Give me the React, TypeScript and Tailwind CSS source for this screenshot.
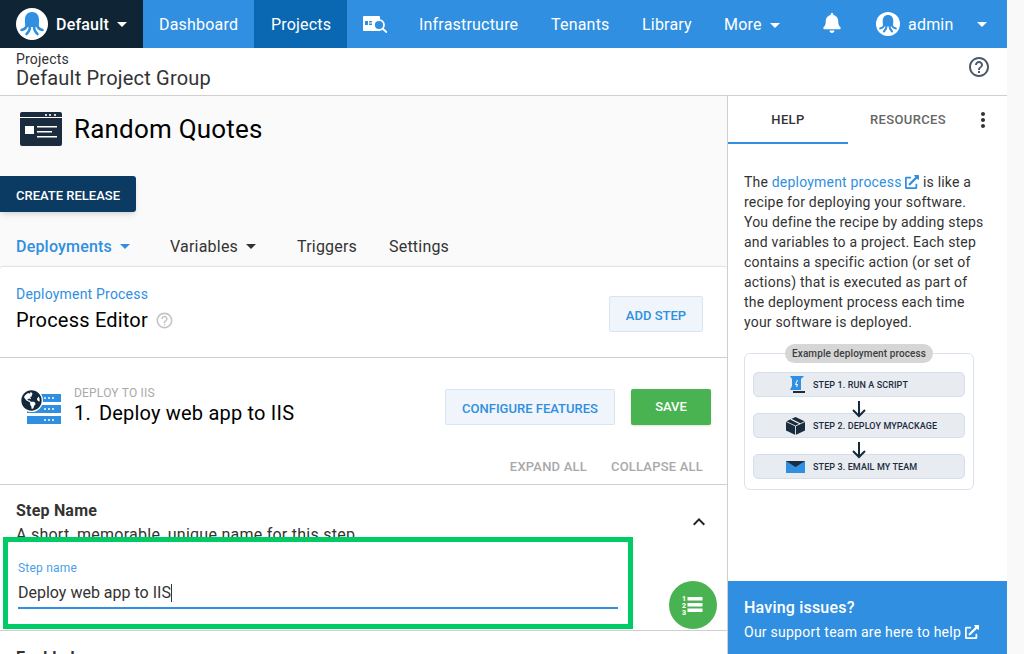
import { FaBell, FaExternalLinkAlt, FaGlobeAmericas } from "react-icons/fa";
import { MdExpandLess, MdHelpOutline, MdMoreVert } from "react-icons/md";

function Caret({ className = "" }: { className?: string }) {
  return <span className={`inline-block w-0 h-0 border-x-[5px] border-x-transparent border-t-[5px] ${className}`} />;
}

function OctopusLogo({ size, fill }: { size: number; fill: string }) {
  return (
    <svg width={size} height={size} viewBox="0 0 32 32">
      <circle cx="16" cy="16" r="16" fill="#fff" />
      <path fill={fill} d="M16 4c4.500 0 7 3.200 7 7.500 0 3 .2 5-1 7.500H10c-1.200-2.500-1-4.500-1-7.500C9 7.200 11.500 4 16 4z" />
      <g fill="none" stroke={fill} strokeWidth="2.600" strokeLinecap="round">
        <path d="M11 16.500Q10.500 21 5.500 22" />
        <path d="M14 18Q14 23 10.500 26" />
        <path d="M18 18Q18 23 21.500 26" />
        <path d="M21 16.500Q21.500 21 26.500 22" />
      </g>
    </svg>
  );
}

function ProjectIcon() {
  return (
    <svg width="42" height="34" viewBox="0 0 42 34">
      <rect width="42" height="34" rx="2" fill="#1a2c3d" />
      <rect x="0" y="5" width="42" height="1" fill="#fff" />
      <circle cx="26" cy="3" r="1.100" fill="#fff" />
      <circle cx="30" cy="3" r="1.100" fill="#fff" />
      <circle cx="35" cy="3" r="1.100" fill="#fff" />
      <rect x="5" y="14" width="9" height="8" fill="#fff" />
      <rect x="17" y="14" width="20" height="1.500" fill="#fff" />
      <rect x="17" y="19" width="15" height="1.500" fill="#fff" />
      <rect x="17" y="24" width="20" height="1.500" fill="#fff" />
    </svg>
  );
}

function TasksIcon() {
  return (
    <svg width="24" height="17" viewBox="0 0 24 17">
      <rect x="0" y="0" width="17" height="15" rx="1" fill="#fff" />
      <rect x="2" y="5" width="3" height="4" fill="#308fe0" />
      <rect x="6" y="5" width="3" height="1.500" fill="#308fe0" />
      <rect x="6" y="7.500" width="3" height="1.500" fill="#308fe0" />
      <circle cx="16" cy="9" r="5" fill="#308fe0" stroke="#fff" strokeWidth="1.800" />
      <path d="M19.500 12.500L24 16.500" stroke="#fff" strokeWidth="2" />
    </svg>
  );
}

function ServerGlobeIcon() {
  return (
    <div className="relative w-[42px] h-[38px]">
      <div className="absolute left-[7px] top-[6px] flex flex-col gap-[3px]">
        {[0, 1, 2].map((i) => (
          <div key={i} className="w-[34px] h-[8px] bg-[#308fe0] flex items-center justify-end gap-[2px] pr-[7px]">
            <span className="w-[2px] h-[2px] bg-white rounded-full" />
            <span className="w-[2px] h-[2px] bg-white rounded-full" />
            <span className="w-[2px] h-[2px] bg-white rounded-full" />
          </div>
        ))}
      </div>
      <div className="absolute left-0 top-[1px] rounded-full bg-white p-[1px]">
        <FaGlobeAmericas size={21} color="#14293b" />
      </div>
    </div>
  );
}

function ScriptIcon() {
  return (
    <svg width="16" height="18" viewBox="0 0 16 18">
      <path d="M1 0h14l-3 3v11H1l2-4V3z" fill="#308fe0" />
      <path d="M4 15h12v2H4z" fill="#1a2c3d" />
      <path d="M8.500 4L6.500 8.500h2L7.500 11" stroke="#fff" strokeWidth="1" fill="none" />
    </svg>
  );
}

function CubeIcon() {
  return (
    <svg width="19" height="18" viewBox="0 0 19 18">
      <path d="M9.500 0L19 4.500v9L9.500 18 0 13.500v-9z" fill="#1a2c3d" />
      <path d="M0 4.500L9.500 9 19 4.500M9.500 9v9" stroke="#fff" strokeWidth=".8" fill="none" />
      <path d="M5 2.300L14 6.700" stroke="#fff" strokeWidth="1.200" />
    </svg>
  );
}

function MailIcon() {
  return (
    <svg width="19" height="12" viewBox="0 0 19 12">
      <rect width="19" height="12" fill="#308fe0" />
      <path d="M0 0h19l-9.500 6z" fill="#1a2c3d" />
    </svg>
  );
}

function StepsIcon() {
  return (
    <svg width="22" height="22" viewBox="0 0 22 22" fill="#fff">
      <rect x="5.500" y="3" width="15" height="3.500" />
      <rect x="5.500" y="9" width="15" height="3.500" />
      <rect x="5.500" y="14.500" width="15" height="3.500" />
      <g fontSize="7" fontWeight="900" fontFamily="Roboto, sans-serif">
        <text x="0" y="7">1</text>
        <text x="0" y="14">2</text>
        <text x="0" y="21">3</text>
      </g>
    </svg>
  );
}

function DiagramStep({ icon, label }: { icon: React.ReactNode; label: string }) {
  return (
    <div className="h-[25px] rounded-[5px] bg-[#e8ebf0] border border-[#d3deee] flex items-center">
      <div className="w-[54px] flex justify-end pr-[3px]">{icon}</div>
      <span className="ml-[5px] text-[9px] font-medium tracking-[0.1px] text-[#1a2c3d] whitespace-nowrap">{label}</span>
    </div>
  );
}

function DownArrow() {
  return (
    <div className="relative z-10 h-[16px] flex justify-center">
      <svg width="14" height="16" viewBox="0 0 14 16" className="mt-[4px] overflow-visible shrink-0">
        <path d="M7 0v15M1 9L7 15l6-6" stroke="#14293b" strokeWidth="2" fill="none" />
      </svg>
    </div>
  );
}

function ExampleDiagram() {
  return (
    <div className="relative mt-[21px] w-[230px] h-[137px] rounded-[6px] border border-[#dbe3f0] px-[8px] pt-[18px]">
      <div className="absolute left-[40px] -top-[10px] h-[19px] px-[7px] rounded-full bg-[#d6d6d6] flex items-center text-[10px] font-medium tracking-[0.1px] text-[#3d3d3d] whitespace-nowrap">
        Example deployment process
      </div>
      <DiagramStep icon={<ScriptIcon />} label="STEP 1. RUN A SCRIPT" />
      <DownArrow />
      <DiagramStep icon={<CubeIcon />} label="STEP 2. DEPLOY MYPACKAGE" />
      <DownArrow />
      <DiagramStep icon={<MailIcon />} label="STEP 3. EMAIL MY TEAM" />
    </div>
  );
}

function TopNav() {
  return (
    <nav className="h-12 bg-[#308fe0] flex items-center text-white text-base shrink-0">
      <div className="h-full w-[143px] bg-[#0f2535] flex items-center pl-4">
        <OctopusLogo size={32} fill="#308fe0" />
        <span className="ml-2 pt-px font-medium">Default</span>
        <Caret className="ml-2 border-t-white" />
      </div>
      <a className="h-full flex items-center pt-[2px] px-4 w-[111px]">Dashboard</a>
      <a className="h-full flex items-center pt-[2px] pl-[17px] w-[93px] bg-[#0a67b1]">Projects</a>
      <a className="h-full flex items-center pl-4 w-[56px]"><TasksIcon /></a>
      <a className="h-full flex items-center pt-[2px] pl-4 w-[148px]">Infrastructure</a>
      <a className="h-full flex items-center pt-[2px] w-[91px]">Tenants</a>
      <a className="h-full flex items-center pt-[2px] w-[82px]">Library</a>
      <a className="h-full flex items-center pt-[2px] w-[99px]">
        More
        <Caret className="ml-2 border-t-white" />
      </a>
      <FaBell size={20} className="-ml-px -mt-[3px]" />
      <div className="ml-[34px] flex items-center">
        <OctopusLogo size={24} fill="#308fe0" />
        <span className="ml-2 pt-px">admin</span>
        <Caret className="ml-[24px] border-t-white" />
      </div>
    </nav>
  );
}

function ProcessHeader() {
  return (
    <div className="h-[91px] px-4 border-b border-[#cfcfcf] flex items-center justify-between">
      <div className="-mt-[7px]">
        <a className="block text-sm leading-5 text-[#308fe0]">Deployment Process</a>
        <div className="flex items-center mt-[3px]">
          <h2 className="text-xl leading-[26px] text-black">Process Editor</h2>
          <MdHelpOutline size={19} color="#c4c4c4" className="ml-[7px]" />
        </div>
      </div>
      <button className="w-[94px] h-[36px] pt-[4px] mr-2 mt-[3px] bg-[#eff5fb] border border-[#d7e6f5] rounded-[2px] text-[#308fe0] text-[13px] font-medium tracking-normal">
        ADD STEP
      </button>
    </div>
  );
}

function StepHeader() {
  return (
    <>
      <div className="flex items-center justify-between pt-[30px] pl-[20px] pr-4">
        <div className="flex items-center">
          <ServerGlobeIcon />
          <div className="ml-3 -mt-[2px]">
            <div className="text-xs leading-[14px] text-[#a9a9a9]">DEPLOY TO IIS</div>
            <div className="text-xl leading-[26px] text-black whitespace-nowrap">
              1.<span className="ml-[8px]">Deploy web app to IIS</span>
            </div>
          </div>
        </div>
        <div className="flex items-center gap-[16px]">
          <button className="w-[170px] h-[36px] pt-[4px] bg-[#eff5fb] border border-[#d7e6f5] rounded-[2px] text-[#308fe0] text-[13px] font-medium tracking-normal">
            CONFIGURE FEATURES
          </button>
          <button className="w-[80px] h-[36px] bg-[#48b350] rounded-[2px] text-white text-[13px] font-medium tracking-normal shadow-sm">
            SAVE
          </button>
        </div>
      </div>
      <div className="flex justify-end gap-[24px] pr-6 mt-[31px] h-[27px] text-[13px] font-medium text-[#a9a9a9]">
        <span>EXPAND ALL</span>
        <span>COLLAPSE ALL</span>
      </div>
    </>
  );
}

function LeftColumn() {
  return (
    <main className="relative w-[727px] h-[558px] overflow-hidden bg-[#fafafa] shrink-0">
      <div className="flex items-center h-[66px] pl-5">
        <ProjectIcon />
        <h1 className="ml-3 text-[26px] text-black">Random Quotes</h1>
      </div>
      <button className="mt-[14px] block w-[136px] h-[36px] pt-[4px] bg-[#0b3a63] rounded-r-[3px] text-white text-[13px] font-medium tracking-normal shadow-md">
        CREATE RELEASE
      </button>
      <div className="h-[54px] pl-4 pt-[23px] flex items-start text-base leading-6 text-[#333]">
        <span className="font-medium text-[#308fe0]">Deployments</span>
        <Caret className="ml-2 mt-[9px] border-t-[#308fe0]" />
        <span className="ml-[40px]">Variables</span>
        <Caret className="ml-2 mt-[9px] border-t-[#333]" />
        <span className="ml-[41px]">Triggers</span>
        <span className="ml-[32px]">Settings</span>
      </div>
      <section className="bg-white rounded-t-[3px] border-t border-[#e2e2e2] shadow-sm">
        <ProcessHeader />
        <StepHeader />
        <div className="relative h-[147px] border-y border-[#cfcfcf] px-4 pt-[16px] text-[#333]">
          <div className="text-base leading-5 font-bold">Step Name</div>
          <div className="text-base leading-5 mt-[4px] tracking-[0.25px]">A short, memorable, unique name for this step</div>
          <MdExpandLess size={24} color="#222" className="absolute right-4 top-[25px]" />
        </div>
        <div className="px-4 pt-[17px] text-base font-bold leading-5 text-[#333]">Enabled</div>
      </section>

      {/* green annotation over the field */}
      <div className="absolute left-[3px] top-[441px] w-[630px] h-[92px] bg-white border-[5px] border-[#00cc66] px-[10px] pt-[18px]">
        <label className="block text-xs leading-4 text-[#4a9fe8]">Step name</label>
        <div className="h-[33px] pt-[2px] flex items-center border-b-2 border-[#308fe0] w-[600px] text-base tracking-normal text-[#333]">
          Deploy web app to IIS<span className="w-px h-[18px] bg-[#333]" />
        </div>
      </div>

      <button className="absolute left-[669px] top-[485px] w-12 h-12 rounded-full bg-[#48b350] flex items-center justify-center">
        <StepsIcon />
      </button>
    </main>
  );
}

function HelpSidebar() {
  return (
    <aside className="w-[280px] h-[558px] border-l border-[#cfcfcf] bg-white flex flex-col shrink-0">
      <div className="h-[48px] flex text-[13px] font-medium tracking-[0.35px] items-stretch">
        <div className="w-[120px] pt-[2px] border-b-2 border-[#308fe0] flex items-center justify-center text-[#333]">HELP</div>
        <div className="w-[120px] flex items-center justify-center text-[#666]">RESOURCES</div>
        <div className="flex-1 flex items-center justify-center text-[#333]">
          <MdMoreVert size={24} className="-ml-[10px]" />
        </div>
      </div>
      <div className="flex-1 px-4 pt-[28px] text-sm leading-5 text-[#333]">
        <p>
          The <a className="text-[#308fe0]">deployment process <FaExternalLinkAlt size={14} className="inline -mt-[3px]" /></a> is like a
          recipe for deploying your software. You define the recipe by adding steps and variables to a project. Each
          step contains a specific action (or set of actions) that is executed as part of the deployment process each
          time your software is deployed.
        </p>
        <ExampleDiagram />
      </div>
      <div className="h-[73px] bg-[#308fe0] text-white px-4 pt-[17px]">
        <div className="text-base leading-5 font-medium">Having issues?</div>
        <div className="text-sm leading-5 mt-[4px] whitespace-nowrap tracking-[0.25px]">
          Our support team are here to help <FaExternalLinkAlt size={14} className="inline -mt-[3px]" />
        </div>
      </div>
    </aside>
  );
}

export default function App() {
  return (
    <div className="w-[1024px] h-[654px] overflow-hidden bg-[#f9f9f9] font-['Roboto',sans-serif] tracking-[0.2px]">
      <div className="w-[1007px] h-full flex flex-col">
        <TopNav />
        <header className="h-[48px] bg-white border-b border-[#cfcfcf] pl-4 pr-4 flex items-center justify-between shrink-0">
          <div className="-mt-[4px]">
            <div className="text-sm leading-[16px] text-[#333]">Projects</div>
            <div className="text-xl leading-[22px] text-[#333]">Default Project Group</div>
          </div>
          <MdHelpOutline size={24} color="#4a5a68" className="-mt-[10px]" />
        </header>
        <div className="flex">
          <LeftColumn />
          <HelpSidebar />
        </div>
      </div>
    </div>
  );
}
